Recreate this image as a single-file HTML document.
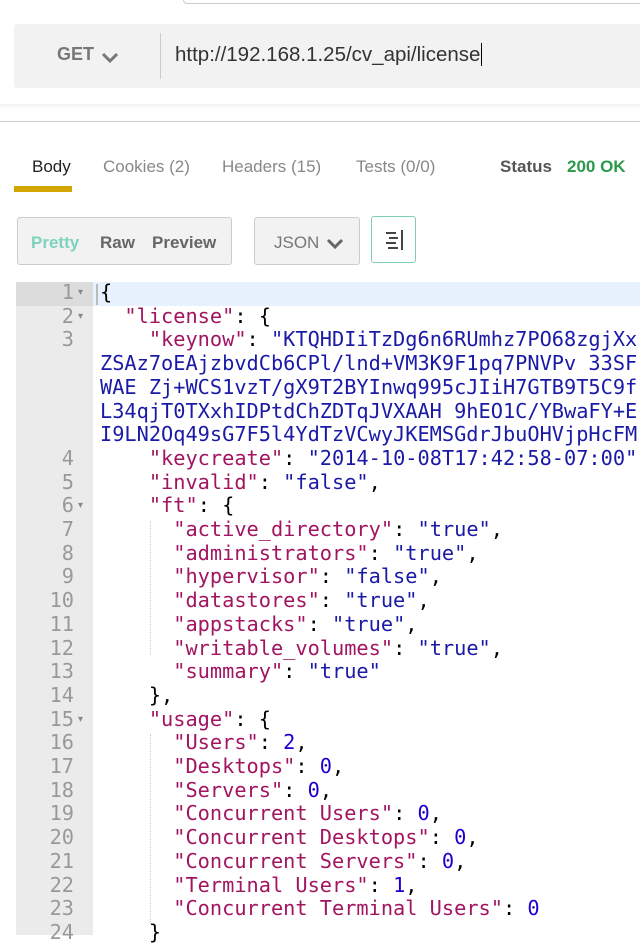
<!DOCTYPE html>
<html><head><style>
body{margin:0;width:640px;height:935px;overflow:hidden;background:#fff;font-family:"Liberation Sans",sans-serif;position:relative}
.a{position:absolute}
.code{font-family:"DejaVu Sans Mono","Liberation Mono",monospace;font-size:20.3px;line-height:23.7px;white-space:pre;color:#000}
.k{color:#a11561}.s{color:#1a1aa6}.n{color:#1c00cf}
.g{color:#999;text-align:right;width:58px;font-family:"DejaVu Sans Mono",monospace;font-size:20.3px;line-height:23.7px;white-space:pre}
</style></head><body>
<div class="a" style="left:183px;top:-10px;width:470px;height:12px;border:1px solid #ccc;border-radius:4px"></div>
<div class="a" style="left:14px;top:24px;width:640px;height:64px;background:#f2f2f2;border-radius:3px"></div>
<div class="a" style="left:57px;top:44px;font-size:18px;font-weight:bold;color:#777">GET</div>
<svg class="a" style="left:101px;top:51px" width="18" height="12"><path d="M2 3 L9 10 L16 3" fill="none" stroke="#777" stroke-width="3"/></svg>
<div class="a" style="left:160px;top:33px;width:1px;height:46px;background:#ccc"></div>
<div class="a" style="left:175px;top:43px;font-size:20.5px;color:#333">http://192.168.1.25/cv_api/license<span style="border-left:1.5px solid #000;margin-left:1px"></span></div>
<div class="a" style="left:0;top:104px;width:640px;height:4px;background:linear-gradient(#f3f3f3,#fafafa)"></div>
<div class="a" style="left:0;top:121px;width:640px;height:1px;background:#ccc"></div>
<div class="a" style="left:32px;top:157px;font-size:17px;color:#222">Body</div>
<div class="a" style="left:103px;top:157px;font-size:17px;color:#888">Cookies (2)</div>
<div class="a" style="left:222px;top:157px;font-size:17px;color:#888">Headers (15)</div>
<div class="a" style="left:356px;top:157px;font-size:17px;color:#888">Tests (0/0)</div>
<div class="a" style="left:500px;top:157px;font-size:17px;color:#555;font-weight:bold">Status</div>
<div class="a" style="left:567px;top:157px;font-size:17px;color:#2a9a4a;font-weight:bold">200 OK</div>
<div class="a" style="left:14px;top:186px;width:58px;height:6px;background:#d4a400"></div>
<div class="a" style="left:17px;top:217px;width:215px;height:48px;background:#f2f2f2;border:1px solid #ccc;border-radius:3px;box-sizing:border-box"></div>
<div class="a" style="left:31px;top:233px;font-size:17px;font-weight:bold;color:#7dd3bb">Pretty</div>
<div class="a" style="left:100px;top:233px;font-size:17px;font-weight:bold;color:#666">Raw</div>
<div class="a" style="left:152px;top:233px;font-size:17px;font-weight:bold;color:#666">Preview</div>
<div class="a" style="left:254px;top:217px;width:106px;height:48px;background:#f2f2f2;border:1px solid #ccc;border-radius:3px;box-sizing:border-box"></div>
<div class="a" style="left:274px;top:233px;font-size:17px;color:#777">JSON</div>
<svg class="a" style="left:326px;top:237px" width="18" height="12"><path d="M2 3 L9 10 L16 3" fill="none" stroke="#666" stroke-width="3"/></svg>
<div class="a" style="left:371px;top:216px;width:45px;height:47px;border:1.5px solid #7fcdb8;border-radius:3px;box-sizing:border-box"></div>
<svg class="a" style="left:384px;top:229px" width="22" height="22"><g stroke="#444" stroke-width="2"><line x1="2" y1="4" x2="12" y2="4"/><line x1="5" y1="9" x2="14" y2="9"/><line x1="2" y1="14" x2="12" y2="14"/><line x1="4" y1="19" x2="14" y2="19"/><line x1="18" y1="1" x2="18" y2="21"/></g></svg>
<div class="a" style="left:16px;top:282px;width:77px;height:653px;background:#ebebeb"></div>
<div class="a" style="left:16px;top:282px;width:77px;height:24px;background:#dcdcdc"></div>
<div class="a" style="left:93px;top:282px;width:547px;height:24px;background:#e8f2fe"></div>
<div class="a" style="left:96px;top:284px;width:2px;height:21px;background:#bbb"></div>
<div class="a" style="left:150px;top:521px;height:134px;border-left:1px dotted #ccc"></div>
<div class="a" style="left:150px;top:734px;height:190px;border-left:1px dotted #ccc"></div>
<div class="a g" style="left:16px;top:281px">1
2
3




4
5
6
7
8
9
10
11
12
13
14
15
16
17
18
19
20
21
22
23
24</div>
<div class="a" style="left:78px;top:281px;font-size:10px;line-height:23.7px;color:#888;white-space:pre">▾
▾







▾








▾</div>
<div class="a code" style="left:100px;top:281px">{
  <span class="k">"license"</span>: {
    <span class="k">"keynow"</span>: <span class="s">"KTQHDIiTzDg6n6RUmhz7PO68zgjXx
ZSAz7oEAjzbvdCb6CPl/lnd+VM3K9F1pq7PNVPv 33SF
WAE Zj+WCS1vzT/gX9T2BYInwq995cJIiH7GTB9T5C9f
L34qjT0TXxhIDPtdChZDTqJVXAAH 9hEO1C/YBwaFY+E
I9LN2Oq49sG7F5l4YdTzVCwyJKEMSGdrJbuOHVjpHcFM</span>
    <span class="k">"keycreate"</span>: <span class="s">"2014-10-08T17:42:58-07:00"</span>
    <span class="k">"invalid"</span>: <span class="s">"false"</span>,
    <span class="k">"ft"</span>: {
      <span class="k">"active_directory"</span>: <span class="s">"true"</span>,
      <span class="k">"administrators"</span>: <span class="s">"true"</span>,
      <span class="k">"hypervisor"</span>: <span class="s">"false"</span>,
      <span class="k">"datastores"</span>: <span class="s">"true"</span>,
      <span class="k">"appstacks"</span>: <span class="s">"true"</span>,
      <span class="k">"writable_volumes"</span>: <span class="s">"true"</span>,
      <span class="k">"summary"</span>: <span class="s">"true"</span>
    },
    <span class="k">"usage"</span>: {
      <span class="k">"Users"</span>: <span class="n">2</span>,
      <span class="k">"Desktops"</span>: <span class="n">0</span>,
      <span class="k">"Servers"</span>: <span class="n">0</span>,
      <span class="k">"Concurrent Users"</span>: <span class="n">0</span>,
      <span class="k">"Concurrent Desktops"</span>: <span class="n">0</span>,
      <span class="k">"Concurrent Servers"</span>: <span class="n">0</span>,
      <span class="k">"Terminal Users"</span>: <span class="n">1</span>,
      <span class="k">"Concurrent Terminal Users"</span>: <span class="n">0</span>
    }</div>
</body></html>
